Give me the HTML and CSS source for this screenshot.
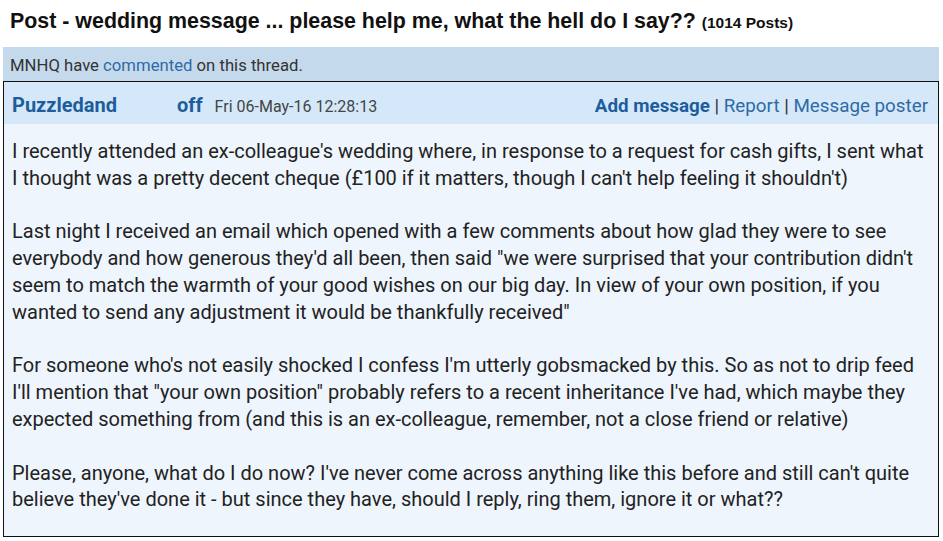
FILE: index.html
```html
<!DOCTYPE html>
<html>
<head>
<meta charset="utf-8">
<link rel="stylesheet" href="styles.css">
</head>
<body>
<div class="page">
  <h1 class="title">Post - wedding message ... please help me, what the hell do I say?? <span class="count">(1014 Posts)</span></h1>
  <div class="notice">MNHQ have <a class="link" href="#">commented</a> on this thread.</div>
  <div class="post">
    <div class="post-head">
      <span class="name">Puzzledand</span>
      <span class="off">off</span>
      <span class="date">Fri 06-May-16 12:28:13</span>
      <span class="actions"><a class="add" href="#">Add message</a> | <a class="act" href="#">Report</a> | <a class="act" href="#">Message poster</a></span>
    </div>
    <div class="post-body">
      <p>I recently attended an ex-colleague's wedding where, in response to a request for cash gifts, I sent what I thought was a pretty decent cheque (£100 if it matters, though I can't help feeling it shouldn't)</p>
      <p>Last night I received an email which opened with a few comments about how glad they were to see everybody and how generous they'd all been, then said "we were surprised that your contribution didn't seem to match the warmth of your good wishes on our big day. In view of your own position, if you wanted to send any adjustment it would be thankfully received"</p>
      <p>For someone who's not easily shocked I confess I'm utterly gobsmacked by this. So as not to drip feed I'll mention that "your own position" probably refers to a recent inheritance I've had, which maybe they expected something from (and this is an ex-colleague, remember, not a close friend or relative)</p>
      <p>Please, anyone, what do I do now? I've never come across anything like this before and still can't quite believe they've done it - but since they have, should I reply, ring them, ignore it or what??</p>
    </div>
  </div>
</div>
</body>
</html>
```
FILE: styles.css
```css
html, body {
  margin: 0;
  padding: 0;
  background: #fff;
}
body {
  font-family: Roboto, "Liberation Sans", sans-serif;
  color: #222;
}
.page {
  padding: 0 4px 0 3px;
}
.title {
  margin: 0;
  padding: 8px 0 0 7px;
  height: 47px;
  box-sizing: border-box;
  font-family: "Liberation Sans", Arial, sans-serif;
  font-size: 21.4px;
  font-weight: 700;
  color: #111;
  line-height: 26px;
}
.count {
  font-size: 15.5px;
}
.notice {
  background: #c5d9ec;
  height: 34px;
  box-sizing: border-box;
  padding: 9px 7px 0;
  font-size: 16.7px;
  color: #333;
  line-height: 20px;
}
.link {
  color: #2f6aa6;
  text-decoration: none;
}
.post {
  border: 1px solid #111;
  background: #eef5fd;
}
.post-head {
  display: flex;
  align-items: baseline;
  background: #d5e8fa;
  height: 42px;
  box-sizing: border-box;
  padding: 11px 10px 0 8px;
}
.name {
  font-weight: 700;
  font-size: 20px;
  color: #1d5d9c;
  width: 165px;
}
.off {
  font-weight: 700;
  font-size: 20px;
  color: #1d5d9c;
  margin-right: 12px;
}
.date {
  font-size: 16px;
  color: #444;
}
.actions {
  margin-left: auto;
  font-size: 18.8px;
  color: #333;
}
.add {
  font-weight: 700;
  color: #1d5d9c;
  text-decoration: none;
}
.act {
  color: #2f6aa6;
  text-decoration: none;
}
.post-body {
  padding: 14px 11px 23px 8px;
  font-size: 20px;
  line-height: 26.8px;
  color: #222;
}
.post-body p {
  margin: 0 0 26.8px;
}
.post-body p:last-child {
  margin-bottom: 0;
}
```
